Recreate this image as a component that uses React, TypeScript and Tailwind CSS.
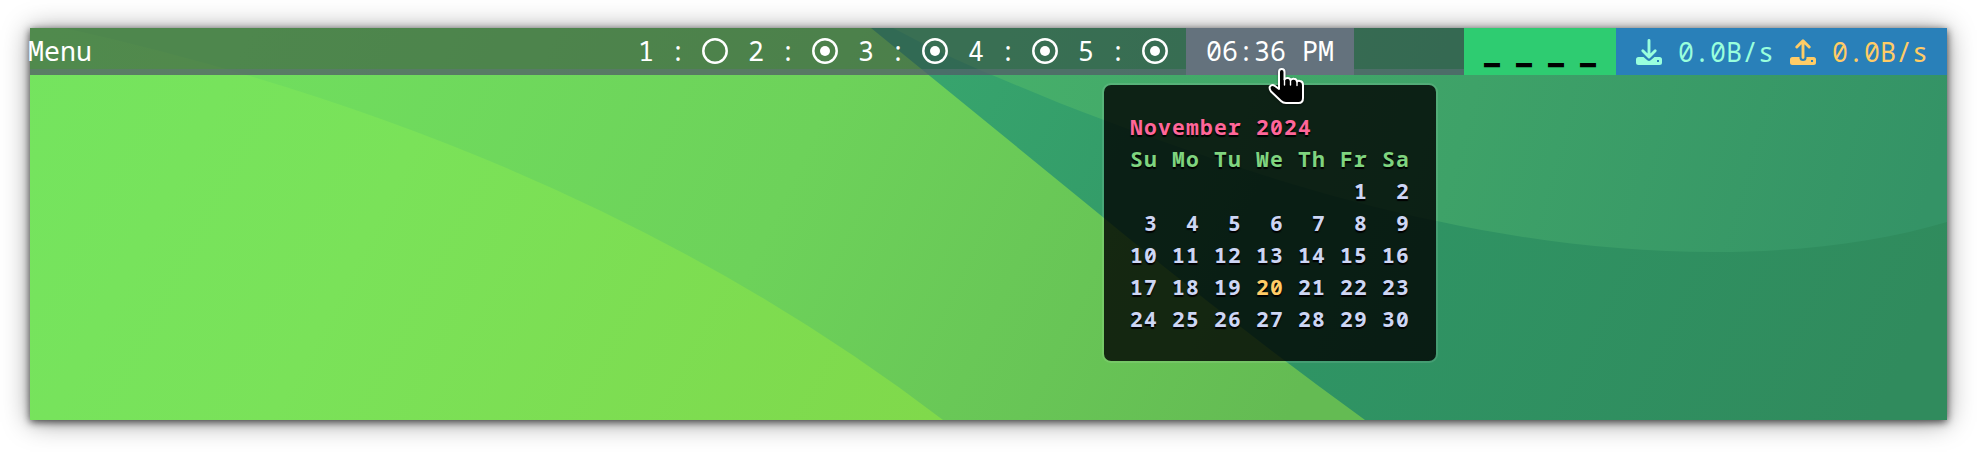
import React from 'react';

const WORKSPACES = [
  { id: 1, filled: false },
  { id: 2, filled: true },
  { id: 3, filled: true },
  { id: 4, filled: true },
  { id: 5, filled: true },
];

const WEEKS = [
  ['', '', '', '', '', '1', '2'],
  ['3', '4', '5', '6', '7', '8', '9'],
  ['10', '11', '12', '13', '14', '15', '16'],
  ['17', '18', '19', '20', '21', '22', '23'],
  ['24', '25', '26', '27', '28', '29', '30'],
];

function Wallpaper() {
  return (
    <svg className="absolute inset-0 h-full w-full" viewBox="30 28 1917 392" preserveAspectRatio="none">
      <defs>
        <linearGradient id="lime" gradientUnits="userSpaceOnUse" x1="30" y1="28" x2="900" y2="480">
          <stop offset="0" stopColor="#74e45f" />
          <stop offset="0.4" stopColor="#7ae259" />
          <stop offset="1" stopColor="#80d94b" />
        </linearGradient>
        <linearGradient id="green" gradientUnits="userSpaceOnUse" x1="250" y1="28" x2="1250" y2="500">
          <stop offset="0" stopColor="#70de5e" />
          <stop offset="0.5" stopColor="#6dd25a" />
          <stop offset="1" stopColor="#64bb53" />
        </linearGradient>
        <linearGradient id="teal" gradientUnits="userSpaceOnUse" x1="950" y1="60" x2="1850" y2="480">
          <stop offset="0" stopColor="#37a46d" />
          <stop offset="0.45" stopColor="#2f9464" />
          <stop offset="1" stopColor="#308b5d" />
        </linearGradient>
        <linearGradient id="sea" gradientUnits="userSpaceOnUse" x1="1000" y1="50" x2="1900" y2="300">
          <stop offset="0" stopColor="#46af6a" />
          <stop offset="0.5" stopColor="#3ea268" />
          <stop offset="1" stopColor="#349366" />
        </linearGradient>
      </defs>
      <rect x="30" y="28" width="1917" height="392" fill="url(#teal)" />
      <path
        d="M893 28C925 45 960 62 992 75C1030 91 1065 106 1104 120C1220 163 1330 199 1437 221C1530 241 1620 252 1715 252C1800 252 1880 242 1947 222V28Z"
        fill="url(#sea)"
      />
      <path d="M30 28H871L1104 218Q1230 322 1365 420H30Z" fill="url(#green)" />
      <path d="M30 28H65Q580 143 943 420H30Z" fill="url(#lime)" />
    </svg>
  );
}

function Workspace({ id, filled }: { id: number; filled: boolean }) {
  return (
    <div className="flex w-[110px] shrink-0 items-center whitespace-pre">
      <span>{`${id} : `}</span>
      <svg className="h-[26px] w-[26px] shrink-0" viewBox="0 0 26 26" fill="none">
        <circle cx="13" cy="13" r="11.7" stroke="#fff" strokeWidth="2.5" />
        {filled && <circle cx="13" cy="13" r="5" fill="#fff" />}
      </svg>
    </div>
  );
}

function TransferIcon({ up = false }: { up?: boolean }) {
  return (
    <svg className="h-[26px] w-[26px] shrink-0" viewBox="0 0 26 26" fill="currentColor">
      {up ? (
        <>
          <path d="M2.500 18H9.500V19.500Q10 22 13 22Q16 22 16.500 19.500V18H23.500Q26 18 26 20.500V23.500Q26 26 23.500 26H2.500Q0 26 0 23.500V20.500Q0 18 2.500 18ZM21 21V23H23V21Z" fillRule="evenodd" />
          <path d="M13 18.500V2.500M6.800 8L13 1.800L19.200 8" fill="none" stroke="currentColor" strokeWidth="2.9" strokeLinecap="round" strokeLinejoin="round" />
        </>
      ) : (
        <>
          <path d="M2.500 18H7.500L11.300 21.300Q13 22.700 14.700 21.300L18.500 18H23.500Q26 18 26 20.500V23.500Q26 26 23.500 26H2.500Q0 26 0 23.500V20.500Q0 18 2.500 18ZM21 21V23H23V21Z" fillRule="evenodd" />
          <path d="M13 1.500V17M6.800 11.800L13 18L19.200 11.800" fill="none" stroke="currentColor" strokeWidth="2.9" strokeLinecap="round" strokeLinejoin="round" />
        </>
      )}
    </svg>
  );
}

function HandCursor() {
  return (
    <svg className="absolute left-[1238px] top-[39px] h-[40px] w-[38px] drop-shadow-[0_1px_1px_rgba(0,0,0,0.4)]" viewBox="0 0 38 40">
      <path
        d="M11 5Q11 2 13.700 2Q16.500 2 16.500 5V12.500Q17.500 11 19.500 11Q22 11 22.500 13Q24 11.500 26 11.800Q28.500 12 29 14.500Q30 13.500 32 14Q35 14.500 35 18V31Q35 36 30.500 36H18Q15 36 13 34L3 24.500Q0.800 21 2 19.300Q4 17 7 19L11 22Z"
        fill="#000"
        stroke="#fff"
        strokeWidth="2"
        strokeLinejoin="round"
      />
      <path d="M16.500 12V18M22.500 13V18M29 14.500V18.500" stroke="#fff" strokeWidth="1.4" strokeLinecap="round" />
    </svg>
  );
}

export default function App() {
  return (
    <div className="h-[452px] w-[1977px] overflow-hidden bg-white px-[30px] pt-7 font-['Noto_Sans_Mono','DejaVu_Sans_Mono',monospace]">
      <div className="relative h-[392px] w-[1917px] shadow-[0_2px_8px_rgba(0,0,0,0.7),0_2px_26px_rgba(0,0,0,0.4)]">
        <Wallpaper />
        <header className="relative flex h-[47px] border-b-[6px] border-[rgba(100,114,125,0.5)] bg-[rgba(43,48,59,0.5)] text-[26.67px] leading-[46px] text-white">
          <div className="h-[46px] w-[608px] shrink-0">
            <span className="-ml-[2px]">Menu</span>
          </div>
          <div className="flex h-[46px] w-[548px] shrink-0">
            {WORKSPACES.map((w) => (
              <Workspace key={w.id} {...w} />
            ))}
          </div>
          <div className="-mb-[6px] h-[47px] w-[168px] shrink-0 bg-[#64727d] text-center">06:36 PM</div>
          <div className="w-[110px] shrink-0" />
          <div className="-mb-[6px] h-[47px] w-[152px] shrink-0 bg-[#2ecc71] pl-5 text-black">▁ ▁ ▁ ▁</div>
          <div className="-mb-[6px] flex h-[47px] w-[331px] shrink-0 items-center whitespace-pre bg-[#2980b9] pl-5">
            <div className="flex w-[154px] shrink-0 items-center gap-4 text-[#99ffdd]">
              <TransferIcon />
              <span>0.0B/s</span>
            </div>
            <div className="flex items-center gap-4 text-[#ffcc66]">
              <TransferIcon up />
              <span>0.0B/s</span>
            </div>
          </div>
        </header>

        <section className="absolute left-[1072px] top-[55px] h-[280px] w-[336px] rounded-[9px] border-2 border-white/10 bg-black/80 bg-clip-padding pl-[26px] pt-[26px] text-[21.33px] font-bold leading-8 tracking-[1.2px] text-[#cdd6f4] [text-shadow:0_2px_1px_#000]">
          <h1 className="text-[#ff6699]">November 2024</h1>
          <div className="grid grid-cols-[repeat(7,42px)] text-[#7fd47f]">
            {['Su', 'Mo', 'Tu', 'We', 'Th', 'Fr', 'Sa'].map((d) => (
              <span key={d}>{d}</span>
            ))}
          </div>
          {WEEKS.map((week, i) => (
            <div key={i} className="grid h-8 grid-cols-[repeat(7,42px)]">
              {week.map((d, j) => (
                <span key={j} className={d === '20' ? 'w-7 text-right text-[#ffcc66]' : 'w-7 text-right'}>
                  {d}
                </span>
              ))}
            </div>
          ))}
        </section>
        <HandCursor />
      </div>
    </div>
  );
}
